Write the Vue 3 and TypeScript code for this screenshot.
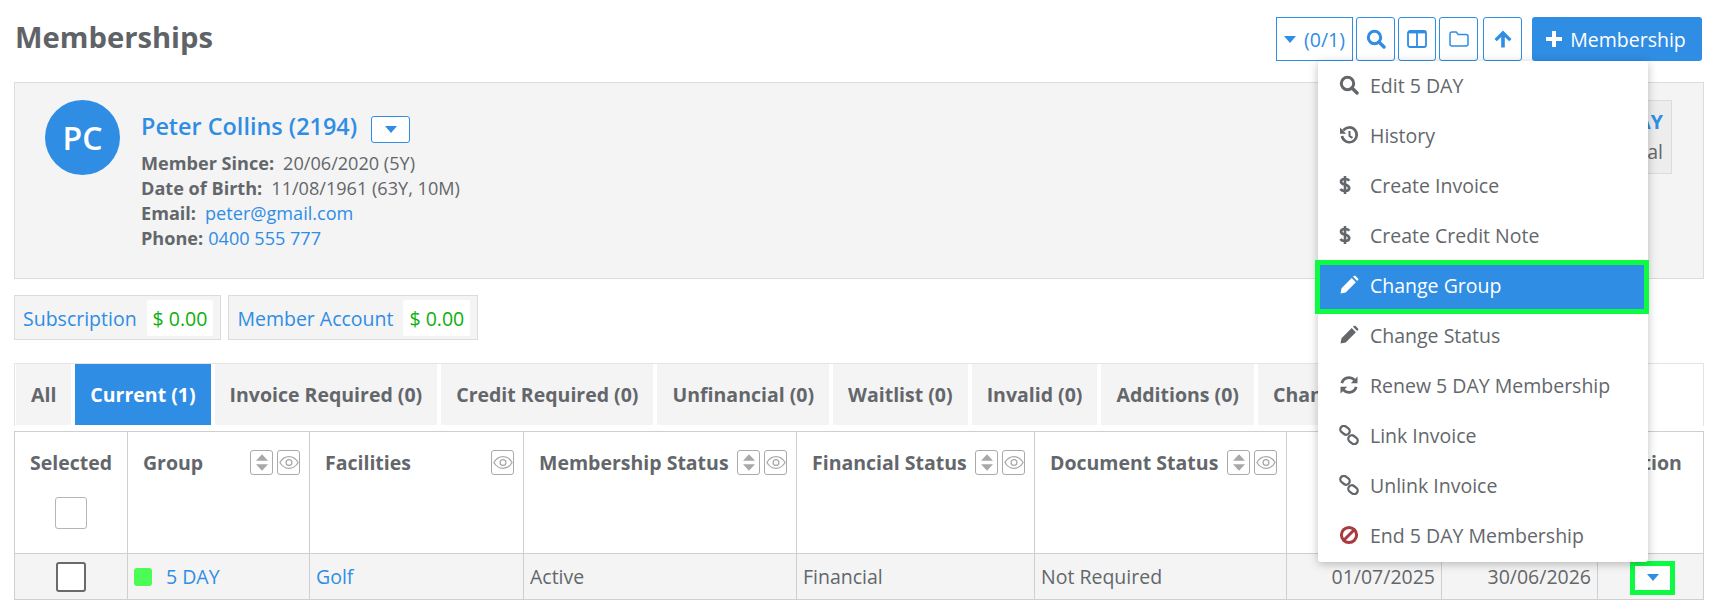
<script setup lang="ts">
interface MenuItem {
  label: string;
  icon: string;
  active?: boolean;
  danger?: boolean;
}
interface Column {
  label: string;
  cls: string;
  sort?: boolean;
  eye?: boolean;
}

const details = [
  { label: 'Member Since:', value: '20/06/2020 (5Y)' },
  { label: 'Date of Birth:', value: '11/08/1961 (63Y, 10M)' },
];

const balances = [
  { label: 'Subscription', value: '$ 0.00' },
  { label: 'Member Account', value: '$ 0.00' },
];

const tabs = [
  'All',
  'Current (1)',
  'Invoice Required (0)',
  'Credit Required (0)',
  'Unfinancial (0)',
  'Waitlist (0)',
  'Invalid (0)',
  'Additions (0)',
  'Changes (0)',
];

const columns: Column[] = [
  { label: 'Group', cls: 'c-group', sort: true, eye: true },
  { label: 'Facilities', cls: 'c-fac', eye: true },
  { label: 'Membership Status', cls: 'c-mem', sort: true, eye: true },
  { label: 'Financial Status', cls: 'c-fin', sort: true, eye: true },
  { label: 'Document Status', cls: 'c-doc', sort: true, eye: true },
  { label: 'Start Date', cls: 'c-date' },
  { label: 'End Date', cls: 'c-date' },
];

const menu: MenuItem[] = [
  { label: 'Edit 5 DAY', icon: 'search' },
  { label: 'History', icon: 'history' },
  { label: 'Create Invoice', icon: 'dollar' },
  { label: 'Create Credit Note', icon: 'dollar' },
  { label: 'Change Group', icon: 'pencil', active: true },
  { label: 'Change Status', icon: 'pencil' },
  { label: 'Renew 5 DAY Membership', icon: 'refresh' },
  { label: 'Link Invoice', icon: 'link' },
  { label: 'Unlink Invoice', icon: 'link' },
  { label: 'End 5 DAY Membership', icon: 'ban', danger: true },
];
</script>

<template>
  <div class="page">
    <svg class="defs" width="0" height="0" aria-hidden="true">
      <symbol id="i-caret" viewBox="0 0 12 7"><path d="M0 0h12L6 7z" fill="currentColor" /></symbol>
      <symbol id="i-search" viewBox="0 0 20 20">
        <circle cx="8.5" cy="8.5" r="6.2" fill="none" stroke="currentColor" stroke-width="3" />
        <path d="M13 13l5 5" stroke="currentColor" stroke-width="3.4" stroke-linecap="round" />
      </symbol>
      <symbol id="i-columns" viewBox="0 0 20 20">
        <rect x="1" y="2" width="18" height="16" rx="2" fill="none" stroke="currentColor" stroke-width="1.8" />
        <path d="M10 2v16" stroke="currentColor" stroke-width="1.8" />
        <path d="M1 3.500h18" stroke="currentColor" stroke-width="1.800" />
      </symbol>
      <symbol id="i-folder" viewBox="0 0 20 18">
        <path d="M3 2h4.2l2 2.4H17a2 2 0 0 1 2 2V14a2 2 0 0 1-2 2H3a2 2 0 0 1-2-2V4a2 2 0 0 1 2-2z" fill="none" stroke="currentColor" stroke-width="1.5" />
      </symbol>
      <symbol id="i-up" viewBox="0 0 20 20">
        <path d="M10 1.500l8.500 8.500-2.300 2.300-4.400-4.400V18.500H8.200V7.900l-4.400 4.400L1.500 10z" fill="currentColor" />
      </symbol>
      <symbol id="i-plus" viewBox="0 0 16 16"><path d="M6 0h4v6h6v4h-6v6H6v-6H0V6h6z" fill="currentColor" /></symbol>
      <symbol id="i-history" viewBox="0 0 20 20">
        <path d="M4.300 5.500A7.400 7.400 0 1 1 3 11" fill="none" stroke="currentColor" stroke-width="2.600" />
        <path d="M1 2.500v6.200h6.200z" fill="currentColor" />
        <path d="M10.500 6v5l3 1.800" fill="none" stroke="currentColor" stroke-width="2" />
      </symbol>
      <symbol id="i-dollar" viewBox="0 0 12 20" preserveAspectRatio="xMinYMid meet">
        <path d="M10.300 5.800C9.500 4.700 8 4 6 4 3.600 4 2 5 2 6.700c0 3.700 8.200 2 8.200 6.400C10.200 15 8.500 16 6 16c-2.100 0-3.800-.8-4.600-2" fill="none" stroke="currentColor" stroke-width="2.700" />
        <path d="M6 1v18" stroke="currentColor" stroke-width="2.600" />
      </symbol>
      <symbol id="i-pencil" viewBox="0 0 20 20">
        <path d="M1.500 18.500l1-5.200L12.700 3.100l4.200 4.200L6.700 17.500zM14 1.800l.9-.8c.5-.5 1.200-.5 1.700 0l2.400 2.400c.5.5.5 1.200 0 1.700l-.8.900z" fill="currentColor" />
      </symbol>
      <symbol id="i-refresh" viewBox="0 0 20 20">
        <path d="M2.800 8.200A7.500 7.500 0 0 1 15.500 5" fill="none" stroke="currentColor" stroke-width="2.700" />
        <path d="M18.500 1.500v6.700h-6.700z" fill="currentColor" />
        <path d="M17.200 11.800A7.500 7.500 0 0 1 4.500 15" fill="none" stroke="currentColor" stroke-width="2.700" />
        <path d="M1.500 18.500v-6.700h6.700z" fill="currentColor" />
      </symbol>
      <symbol id="i-link" viewBox="0 0 20 20">
        <rect x="1" y="1.800" width="10" height="7" rx="3.500" transform="rotate(38 6 5.300)" fill="none" stroke="currentColor" stroke-width="2.300" />
        <rect x="9" y="11.200" width="10" height="7" rx="3.500" transform="rotate(38 14 14.700)" fill="none" stroke="currentColor" stroke-width="2.300" />
      </symbol>
      <symbol id="i-ban" viewBox="0 0 20 20">
        <circle cx="10" cy="10" r="7.600" fill="none" stroke="currentColor" stroke-width="3" />
        <path d="M4.500 15.500l11-11" stroke="currentColor" stroke-width="3" />
      </symbol>
      <symbol id="i-sort" viewBox="0 0 14 19"><path d="M7 0l7 7.500H0zM7 19l-7-7.500h14z" fill="currentColor" /></symbol>
      <symbol id="i-eye" viewBox="0 0 22 16">
        <path d="M1 8c2.500-4.300 6-6.400 10-6.400S18.500 3.700 21 8c-2.500 4.300-6 6.400-10 6.400S3.500 12.300 1 8z" fill="none" stroke="currentColor" stroke-width="1.400" />
        <circle cx="11" cy="8" r="3.200" fill="none" stroke="currentColor" stroke-width="1.400" />
      </symbol>
    </svg>

    <header class="topbar">
      <h1 class="title">Memberships</h1>
      <div class="tools">
        <button type="button" class="tool tool-count">
          <svg class="caret"><use href="#i-caret" /></svg>
          <span>(0/1)</span>
        </button>
        <button type="button" class="tool tool-w39"><svg class="ic20"><use href="#i-search" /></svg></button>
        <button type="button" class="tool tool-w38"><svg class="ic20"><use href="#i-columns" /></svg></button>
        <button type="button" class="tool tool-w39"><svg class="ic20"><use href="#i-folder" /></svg></button>
        <button type="button" class="tool tool-w39"><svg class="ic20"><use href="#i-up" /></svg></button>
        <button type="button" class="add">
          <svg class="ic16"><use href="#i-plus" /></svg>
          <span>Membership</span>
        </button>

        <ul class="menu">
          <li
            v-for="item in menu"
            :key="item.label"
            class="menu-item"
            :class="{ 'is-active': item.active }"
          >
            <svg class="menu-icon" :class="{ 'is-danger': item.danger }"><use :href="`#i-${item.icon}`" /></svg>
            <span>{{ item.label }}</span>
          </li>
        </ul>
      </div>
    </header>

    <section class="member">
      <div class="avatar">PC</div>
      <div class="info">
        <div class="name-row">
          <a class="name">Peter Collins (2194)</a>
          <button type="button" class="name-btn"><svg class="caret"><use href="#i-caret" /></svg></button>
        </div>
        <div v-for="d in details" :key="d.label" class="line">
          <b>{{ d.label }}</b><span>{{ d.value }}</span>
        </div>
        <div class="line"><b>Email:</b><a>peter@gmail.com</a></div>
        <div class="line line-phone"><b>Phone:</b><a>0400 555 777</a></div>
      </div>
      <div class="group-card">
        <a class="group-name">5 DAY</a>
        <span class="group-sub">Financial</span>
      </div>
    </section>

    <section class="balances">
      <div v-for="b in balances" :key="b.label" class="balance">
        <a>{{ b.label }}</a>
        <span class="amount">{{ b.value }}</span>
      </div>
    </section>

    <nav class="tabs">
      <a v-for="(t, i) in tabs" :key="t" class="tab" :class="{ 'is-current': i === 1 }">{{ t }}</a>
    </nav>

    <table class="grid">
      <colgroup>
        <col class="w-sel" />
        <col class="w-group" />
        <col class="w-fac" />
        <col class="w-mem" />
        <col class="w-fin" />
        <col class="w-doc" />
        <col class="w-start" />
        <col class="w-end" />
        <col />
      </colgroup>
      <thead>
        <tr>
          <th class="th-sel">
            <div class="th-sel-label">Selected</div>
            <span class="check-head" />
          </th>
          <th v-for="c in columns" :key="c.label" :class="c.cls">
            <div class="th-inner">
              <span class="th-label">{{ c.label }}</span>
              <span class="th-btns">
                <span v-if="c.sort" class="mini"><svg class="ic-sort"><use href="#i-sort" /></svg></span>
                <span v-if="c.eye" class="mini"><svg class="ic-eye"><use href="#i-eye" /></svg></span>
              </span>
            </div>
          </th>
          <th class="th-action">Action</th>
        </tr>
      </thead>
      <tbody>
        <tr>
          <td class="td-center"><span class="check" /></td>
          <td class="td-group"><span class="swatch" /><a>5 DAY</a></td>
          <td><a>Golf</a></td>
          <td>Active</td>
          <td>Financial</td>
          <td>Not Required</td>
          <td class="td-right">01/07/2025</td>
          <td class="td-right">30/06/2026</td>
          <td class="td-action">
            <span class="flagged"><svg class="caret"><use href="#i-caret" /></svg></span>
          </td>
        </tr>
      </tbody>
    </table>
  </div>
</template>

<style scoped>
.page {
  width: 1690px;
  margin-left: 14px;
  color: #63676b;
  font-family: "Open Sans", "Liberation Sans", sans-serif;
  font-size: 19.5px;
}
.defs {
  position: absolute;
}
a {
  color: #2f8de4;
}
button {
  font-family: inherit;
  padding: 0;
  cursor: pointer;
}

.topbar {
  display: flex;
  justify-content: space-between;
  height: 61px;
  margin-bottom: 21px;
  padding: 17px 2px 0 1px;
  box-sizing: border-box;
}
.title {
  margin: 0;
  font-size: 29.2px;
  font-weight: 700;
  line-height: 40px;
  color: #5f6368;
}
.tools {
  position: relative;
  display: flex;
  height: 44px;
}
.tool {
  display: flex;
  align-items: center;
  justify-content: center;
  height: 44px;
  margin-right: 3px;
  background: #fff;
  border: 1px solid #2f8de4;
  border-radius: 3px;
  color: #2f8de4;
}
.tool-count {
  width: 77px;
  gap: 8px;
  border-radius: 0;
  font-size: 19.5px;
}
.tool-w39 {
  width: 39px;
}
.tool-w38 {
  width: 38px;
}
.tool-w39:nth-child(5) {
  margin-left: 2px;
  margin-right: 10px;
}
.caret {
  width: 12px;
  height: 7px;
  flex-shrink: 0;
  color: #2f8de4;
}
.ic20 {
  width: 20px;
  height: 20px;
}
.ic16 {
  width: 16px;
  height: 16px;
}
.add {
  display: flex;
  align-items: center;
  justify-content: center;
  gap: 8px;
  width: 170px;
  height: 44px;
  padding-right: 2px;
  background: #2f8de4;
  border: 0;
  border-radius: 3px;
  color: #fff;
  font-size: 19.5px;
}

.menu {
  position: absolute;
  top: 44px;
  right: 54px;
  z-index: 5;
  width: 330px;
  margin: 0;
  padding: 0 0 1px;
  list-style: none;
  background: #fff;
  border-radius: 3px;
  box-shadow: 0 2px 10px rgba(0, 0, 0, 0.25);
}
.menu-item {
  position: relative;
  display: flex;
  align-items: center;
  gap: 11px;
  height: 50px;
  box-sizing: border-box;
  padding: 0 0 2px 21px;
  color: #63676b;
  font-size: 19.5px;
}
.menu-icon {
  width: 20px;
  height: 20px;
  flex-shrink: 0;
}
.menu-icon.is-danger {
  color: #ab3a3e;
}
.menu-item.is-active {
  background: #2f8de4;
  color: #fff;
}
.menu-item.is-active::after {
  content: "";
  position: absolute;
  inset: -1px -1px -3px -3px;
  border: 5px solid #0dfb43;
}

.member {
  display: flex;
  height: 197px;
  box-sizing: border-box;
  padding: 17px 31px 0 30px;
  background: #f4f4f4;
  border: 1px solid #dcdcdc;
}
.avatar {
  display: flex;
  align-items: center;
  justify-content: center;
  width: 75px;
  height: 75px;
  border-radius: 50%;
  background: #2f8de4;
  color: #fff;
  font-size: 32px;
  font-weight: 600;
}
.info {
  margin-left: 21px;
  flex: 1;
  font-size: 18.1px;
  line-height: 25px;
}
.name-row {
  display: flex;
  align-items: center;
  height: 34px;
  margin: 9px 0 8px;
}
.name {
  font-size: 23.4px;
  font-weight: 600;
}
.name-btn {
  display: flex;
  align-items: center;
  justify-content: center;
  width: 39px;
  height: 27px;
  margin: 6px 0 0 14px;
  background: #fff;
  border: 1px solid #2f8de4;
  border-radius: 3px;
}
.line b {
  font-weight: 700;
  margin-right: 9px;
}
.line-phone b {
  margin-right: 5px;
}
.group-card {
  display: flex;
  flex-direction: column;
  align-items: flex-end;
  justify-content: center;
  width: 110px;
  height: 74px;
  box-sizing: border-box;
  padding-right: 8px;
  background: #ededed;
  border: 1px solid #dcdcdc;
  line-height: 30px;
}
.group-name {
  font-weight: 700;
}

.balances {
  display: flex;
  gap: 7px;
  margin-top: 16px;
}
.balance {
  display: flex;
  align-items: center;
  gap: 10px;
  height: 45px;
  box-sizing: border-box;
  padding: 1px 7px 0 8px;
  background: #f4f4f4;
  border: 1px solid #dcdcdc;
}
.amount {
  display: flex;
  align-items: center;
  height: 36px;
  padding: 0 6px;
  background: #fff;
  border-radius: 2px;
  color: #0cb00c;
}

.tabs {
  display: flex;
  gap: 4px;
  height: 63px;
  margin-top: 23px;
  padding: 0 0 1px 1px;
  box-sizing: border-box;
  border: 1px solid #e4e4e4;
  border-bottom: 0;
  overflow: hidden;
}
.tab {
  display: flex;
  align-items: center;
  padding: 0 15px;
  background: #f4f4f4;
  color: #63676b;
  font-weight: 700;
  white-space: nowrap;
}
.tab.is-current {
  background: #2f8de4;
  color: #fff;
}

.grid {
  width: 1690px;
  margin-top: 5px;
  table-layout: fixed;
  border-collapse: collapse;
}
.w-sel { width: 113px; }
.w-group { width: 182px; }
.w-fac { width: 214px; }
.w-mem { width: 273px; }
.w-fin { width: 238px; }
.w-doc { width: 252px; }
.w-start { width: 155px; }
.w-end { width: 156px; }
th,
td {
  border: 1px solid #cfcfcf;
}
th {
  height: 122px;
  box-sizing: border-box;
  padding: 15px 9px 0 15px;
  vertical-align: top;
  text-align: left;
  font-weight: 700;
  white-space: nowrap;
  color: #63676b;
}
.th-sel {
  padding: 15px 0 0;
  text-align: center;
}
.th-sel-label {
  line-height: 32px;
}
.check-head {
  display: block;
  width: 32px;
  height: 32px;
  margin: 18px auto 0;
  box-sizing: border-box;
  background: #fff;
  border: 1px solid #b5b5b5;
  border-radius: 3px;
}
.th-inner {
  display: flex;
  align-items: flex-start;
  justify-content: space-between;
  line-height: 32px;
}
.c-date .th-inner {
  justify-content: flex-end;
}
.th-btns {
  display: flex;
  gap: 4px;
  margin-top: 3px;
}
.mini {
  display: flex;
  align-items: center;
  justify-content: center;
  width: 23px;
  height: 25px;
  box-sizing: border-box;
  background: #fff;
  border: 1px solid #aaa;
  border-radius: 3px;
  color: #a8a8a8;
}
.ic-sort {
  width: 12px;
  height: 17px;
}
.ic-eye {
  width: 20px;
  height: 15px;
}
.th-action {
  text-align: center;
  padding: 15px 0 0;
  line-height: 32px;
}
td {
  height: 46px;
  box-sizing: border-box;
  padding: 0 6px;
  background: #f4f4f4;
  white-space: nowrap;
}
.td-center {
  text-align: center;
}
.check {
  display: block;
  width: 30px;
  height: 30px;
  margin: 0 auto;
  box-sizing: border-box;
  background: #fff;
  border: 2px solid #6a6a6a;
  border-radius: 3px;
}
.swatch {
  display: inline-block;
  vertical-align: -2px;
  width: 18px;
  height: 18px;
  margin-right: 14px;
  background: #4dfb55;
  border-radius: 3px;
}
.td-right {
  text-align: right;
}
.td-action {
  padding: 0 0 0 4px;
}
.flagged {
  display: flex;
  align-items: center;
  justify-content: center;
  width: 45px;
  height: 34px;
  margin: 2px auto 0;
  box-sizing: border-box;
  background: #fff;
  border: 5px solid #0dfb43;
}
</style>

<style>
html,
body {
  background: #fff;
  overflow: hidden;
}
</style>
